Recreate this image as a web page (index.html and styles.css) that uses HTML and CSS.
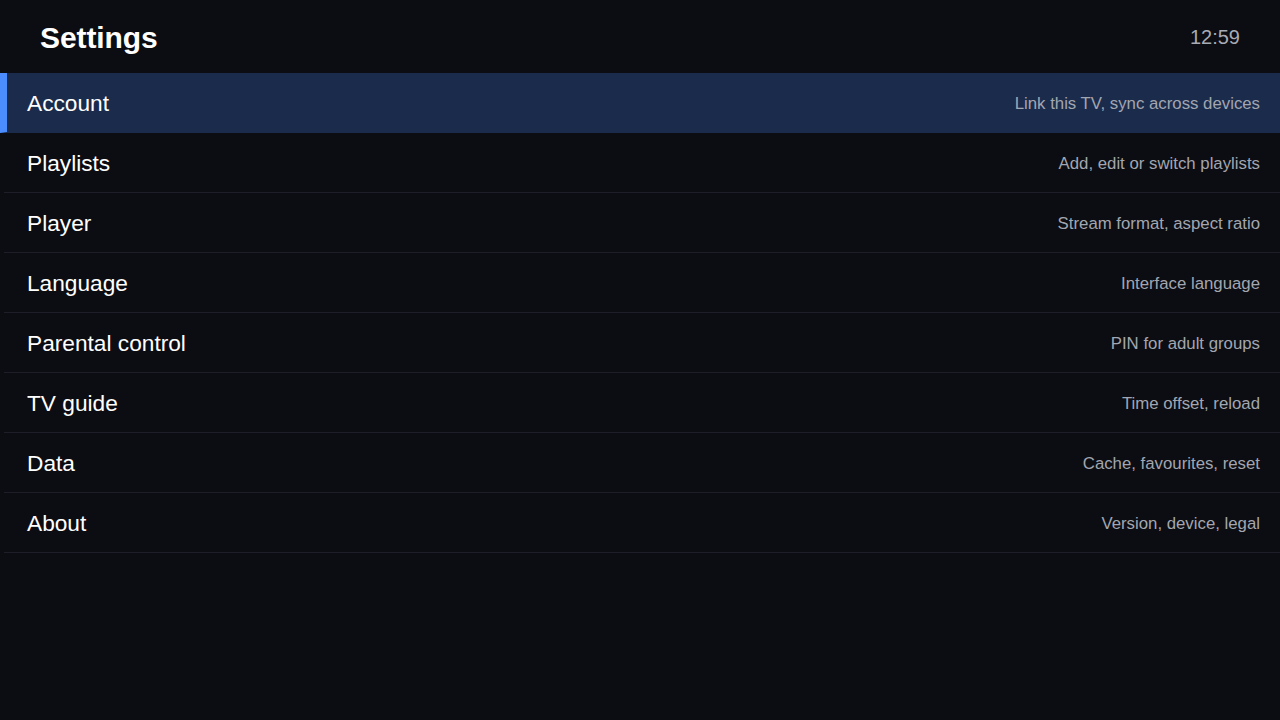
FILE: index.html
```html
<!DOCTYPE html>
<html lang="en">
<head>
<meta charset="utf-8">
<title>Settings</title>
<link rel="stylesheet" href="styles.css">
</head>
<body>
<div class="screen">
  <header class="topbar">
    <h1 class="title">Settings</h1>
    <div class="clock">12:59</div>
  </header>
  <ul class="menu">
    <li class="item focused"><span class="label">Account</span><span class="desc">Link this TV, sync across devices</span></li>
    <li class="item"><span class="label">Playlists</span><span class="desc">Add, edit or switch playlists</span></li>
    <li class="item"><span class="label">Player</span><span class="desc">Stream format, aspect ratio</span></li>
    <li class="item"><span class="label">Language</span><span class="desc">Interface language</span></li>
    <li class="item"><span class="label">Parental control</span><span class="desc">PIN for adult groups</span></li>
    <li class="item"><span class="label">TV guide</span><span class="desc">Time offset, reload</span></li>
    <li class="item"><span class="label">Data</span><span class="desc">Cache, favourites, reset</span></li>
    <li class="item"><span class="label">About</span><span class="desc">Version, device, legal</span></li>
  </ul>
</div>
</body>
</html>
```

FILE: styles.css
```css
* { box-sizing: border-box; }
html, body {
  margin: 0;
  padding: 0;
  background: #0c0d12;
  font-family: "Liberation Sans", Arial, sans-serif;
  color: #f4f5f7;
}
.screen {
  width: 1280px;
  height: 720px;
  background: #0c0d12;
  overflow: hidden;
}
.topbar {
  height: 73px;
  display: flex;
  align-items: center;
  justify-content: space-between;
  padding: 2px 40px 0;
}
.title {
  margin: 0;
  font-size: 30px;
  font-weight: 700;
  color: #ffffff;
  letter-spacing: -0.1px;
}
.clock {
  font-size: 20px;
  color: #a7abb5;
}
.menu {
  list-style: none;
  margin: 0;
  padding: 0 0 0 4px;
}
.item {
  height: 60px;
  display: flex;
  align-items: center;
  justify-content: space-between;
  padding: 2px 20px 0 23px;
  border-bottom: 1px solid #1d1e27;
}
.item.focused {
  margin-left: -4px;
  padding-left: 20px;
  background: #1b2b4c;
  border-left: 7px solid #4b8dff;
  border-bottom-color: #1b2b4c;
}
.label {
  font-size: 22.7px;
  color: #ffffff;
}
.desc {
  font-size: 16.8px;
  color: #a2a6b0;
}
```
